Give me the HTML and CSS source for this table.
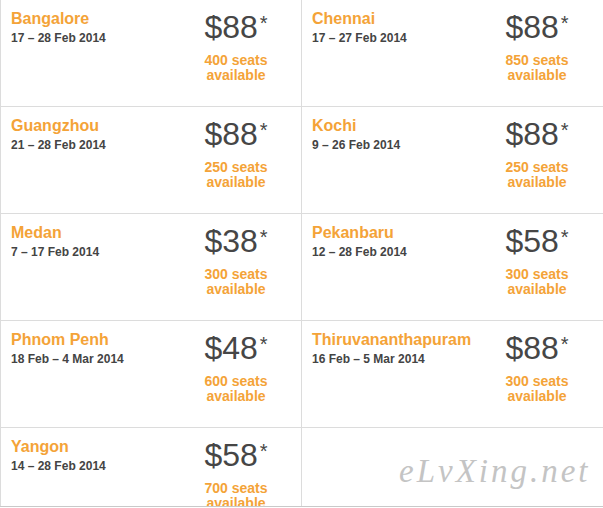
FILE: index.html
```html
<!DOCTYPE html>
<html lang="en">
<head>
<meta charset="utf-8">
<title>Fares</title>
<link rel="stylesheet" href="styles.css">
</head>
<body>
<div class="board">
  <div class="grid">
    <div class="cell">
      <div class="info"><div class="city">Bangalore</div><div class="dates">17 – 28 Feb 2014</div></div>
      <div class="deal"><div class="price">$88<sup>*</sup></div><div class="seats">400 seats<br>available</div></div>
    </div>
    <div class="cell">
      <div class="info"><div class="city">Chennai</div><div class="dates">17 – 27 Feb 2014</div></div>
      <div class="deal"><div class="price">$88<sup>*</sup></div><div class="seats">850 seats<br>available</div></div>
    </div>
    <div class="cell">
      <div class="info"><div class="city">Guangzhou</div><div class="dates">21 – 28 Feb 2014</div></div>
      <div class="deal"><div class="price">$88<sup>*</sup></div><div class="seats">250 seats<br>available</div></div>
    </div>
    <div class="cell">
      <div class="info"><div class="city">Kochi</div><div class="dates">9 – 26 Feb 2014</div></div>
      <div class="deal"><div class="price">$88<sup>*</sup></div><div class="seats">250 seats<br>available</div></div>
    </div>
    <div class="cell">
      <div class="info"><div class="city">Medan</div><div class="dates">7 – 17 Feb 2014</div></div>
      <div class="deal"><div class="price">$38<sup>*</sup></div><div class="seats">300 seats<br>available</div></div>
    </div>
    <div class="cell">
      <div class="info"><div class="city">Pekanbaru</div><div class="dates">12 – 28 Feb 2014</div></div>
      <div class="deal"><div class="price">$58<sup>*</sup></div><div class="seats">300 seats<br>available</div></div>
    </div>
    <div class="cell">
      <div class="info"><div class="city">Phnom Penh</div><div class="dates">18 Feb – 4 Mar 2014</div></div>
      <div class="deal"><div class="price">$48<sup>*</sup></div><div class="seats">600 seats<br>available</div></div>
    </div>
    <div class="cell">
      <div class="info"><div class="city">Thiruvananthapuram</div><div class="dates">16 Feb – 5 Mar 2014</div></div>
      <div class="deal"><div class="price">$88<sup>*</sup></div><div class="seats">300 seats<br>available</div></div>
    </div>
    <div class="cell">
      <div class="info"><div class="city">Yangon</div><div class="dates">14 – 28 Feb 2014</div></div>
      <div class="deal"><div class="price">$58<sup>*</sup></div><div class="seats">700 seats<br>available</div></div>
    </div>
    <div class="cell"></div>
  </div>
  <div class="watermark">eLvXing.net</div>
</div>
</body>
</html>
```

FILE: styles.css
```css
* { box-sizing: border-box; }
html, body { margin: 0; padding: 0; background: #fff; }
body { font-family: "Liberation Sans", Arial, sans-serif; }

.board {
  position: relative;
  width: 603px;
  height: 507px;
  overflow: hidden;
  border-bottom: 1px solid #c9c9c9;
}

.grid {
  display: grid;
  grid-template-columns: 301px 302px;
  grid-auto-rows: 107px;
}

.cell {
  display: grid;
  grid-template-columns: 180px 90px;
  padding-left: 10px;
  border-left: 1px solid #dcdcdc;
  border-bottom: 1px solid #dcdcdc;
}

.info { padding-top: 10px; }

.city {
  font-size: 16px;
  line-height: 18px;
  font-weight: bold;
  color: #f4a338;
  white-space: nowrap;
}

.dates {
  margin-top: 3px;
  font-size: 12px;
  line-height: 14px;
  font-weight: bold;
  color: #444;
  white-space: nowrap;
}

.deal {
  padding-top: 11px;
  text-align: center;
}

.price {
  font-size: 32px;
  line-height: 32px;
  color: #464646;
  white-space: nowrap;
}

.price sup {
  font-size: 20px;
  line-height: 0;
  vertical-align: 8px;
  margin-left: 2px;
}

.seats {
  margin-top: 10px;
  font-size: 14px;
  line-height: 15px;
  font-weight: bold;
  color: #f4a338;
}

.watermark {
  position: absolute;
  left: 399px;
  top: 455px;
  font-family: "Liberation Serif", serif;
  font-style: italic;
  font-size: 33px;
  line-height: 33px;
  letter-spacing: 3px;
  color: #c4c4c4;
  white-space: nowrap;
}
```
